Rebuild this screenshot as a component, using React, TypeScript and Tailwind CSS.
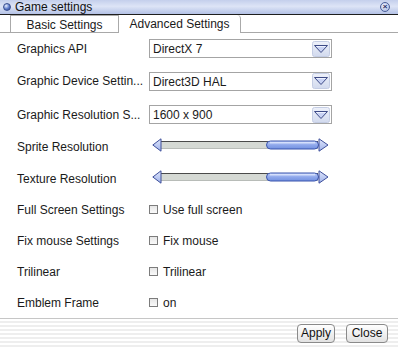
import React from "react";

const rows: { label: string; kind: "select" | "slider" | "check"; value?: string; h: string }[] = [
    {label: "Graphics API", kind: "select", value: "DirectX 7", h: "h-[31px]"},
    {label: "Graphic Device Settin...", kind: "select", value: "Direct3D HAL", h: "h-[34px]"},
    {label: "Graphic Resolution S...", kind: "select", value: "1600 x 900", h: "h-[33px]"},
    {label: "Sprite Resolution", kind: "slider", h: "h-[32px]"},
    {label: "Texture Resolution", kind: "slider", h: "h-[31px]"},
    {label: "Full Screen Settings", kind: "check", value: "Use full screen", h: "h-[31px]"},
    {label: "Fix mouse Settings", kind: "check", value: "Fix mouse", h: "h-[31px]"},
    {label: "Trilinear", kind: "check", value: "Trilinear", h: "h-[31px]"},
    {label: "Emblem Frame", kind: "check", value: "on", h: "h-[31px]"},
];

const DropArrow = () => (
    <svg width="18" height="16" viewBox="0 0 18 16">
        <defs>
            <linearGradient id="dab" x1="0" y1="0" x2="0" y2="1">
                <stop offset="0" stopColor="#eef1fa"/>
                <stop offset="1" stopColor="#d2daee"/>
            </linearGradient>
        </defs>
        <rect x="0.5" y="0.5" width="17" height="15" rx="2" fill="url(#dab)" stroke="#c4cde4"/>
        <path d="M2.5 4.5 L15.5 4.5 L9 11.5 Z" fill="#c9d3f4" stroke="#3d4a86" strokeWidth="1" strokeLinejoin="round"/>
        <path d="M4.5 5.5 L13.5 5.5" stroke="#eef2ff" strokeWidth="1"/>
    </svg>
);

const Slider = () => (
    <svg width="177" height="14" viewBox="0 0 177 14">
        <defs>
            <linearGradient id="thumb" x1="0" y1="0" x2="0" y2="1">
                <stop offset="0" stopColor="#c8d6fa"/>
                <stop offset="0.5" stopColor="#8fa8ec"/>
                <stop offset="1" stopColor="#7391e0"/>
            </linearGradient>
            <linearGradient id="arr" x1="0" y1="0" x2="0" y2="1">
                <stop offset="0" stopColor="#dfe6fc"/>
                <stop offset="1" stopColor="#9fb2ea"/>
            </linearGradient>
        </defs>
        <rect x="8" y="3" width="158" height="8" fill="#d5d9d4"/>
        <path d="M8 3.5 L166 3.5" stroke="#4a4a4a"/>
        <path d="M8 10.5 L166 10.5" stroke="#b8bcb8"/>
        <rect x="114.5" y="3" width="52" height="8" rx="4" fill="url(#thumb)" stroke="#3b55ad"/>
        <path d="M118 4.8 L163 4.8" stroke="#e4ebff" strokeWidth="1"/>
        <path d="M0.8 7 L9 0.8 L9 13.2 Z" fill="url(#arr)" stroke="#3e4f9a" strokeLinejoin="round"/>
        <path d="M176 7 L167 0.8 L167 13.2 Z" fill="url(#arr)" stroke="#3e4f9a" strokeLinejoin="round"/>
    </svg>
);

const Control = ({kind, value}: { kind: string; value?: string }) => {
    if (kind === "select") {
        return (
            <div className="w-[183px] h-[19px] border border-[#a4a4a4] bg-white flex items-center justify-between pl-[3px] pr-[1px]">
                <span className="text-[12px] text-[#1a1a1a] leading-none pt-[1px]">{value}</span>
                <DropArrow/>
            </div>
        );
    }
    if (kind === "slider") {
        return (
            <div className="pl-[3px] -mt-[4px]">
                <Slider/>
            </div>
        );
    }
    return (
        <div className="flex items-center gap-[5px]">
            <span className="w-[9px] h-[9px] border border-[#7c7c7c] bg-[linear-gradient(#e6e6e6,#fafafa)]"/>
            <span className="text-[12px] text-[#1a1a1a] leading-none">{value}</span>
        </div>
    );
};

export default function App() {
    return (
        <div
            className="w-[398px] h-[347px] bg-white overflow-hidden flex flex-col text-[#1a1a1a]"
            style={{fontFamily: '"Liberation Sans", Arial, sans-serif'}}
        >
            <div
                className="h-[15px] shrink-0 flex items-center justify-between pl-[3px] pr-[8px] border-b border-[#1e1e1e] bg-[linear-gradient(#c4cfec,#dde4f6_45%,#b4c2e6)]">
                <div className="flex items-center gap-[4px]">
                    <span
                        className="w-[8px] h-[8px] rounded-full bg-[radial-gradient(circle_at_35%_30%,#e8efff,#5b79c9_55%,#2e4690)] border border-[#3a4f8f]"/>
                    <span className="text-[12px] leading-none text-[#111]">Game settings</span>
                </div>
                <span
                    className="w-[10px] h-[10px] rounded-full border border-[#4a5f9a] bg-[radial-gradient(circle_at_40%_35%,#eef2ff,#9fb0dc)] flex items-center justify-center text-[8px] leading-none text-[#1c2a5c] font-bold">×</span>
            </div>

            <div className="h-[18px] shrink-0 flex items-end pl-[10px] border-b border-[#a8a8a8]">
                <div
                    className="w-[109px] h-[17px] border border-b-0 border-[#aaaaaa] bg-white flex items-center justify-center text-[12px] leading-none pt-[1px]">
                    Basic Settings
                </div>
                <div
                    className="w-[122px] h-[18px] -mb-px self-end bg-white border-r border-[#aaaaaa] rounded-tr-[4px] flex items-center justify-center text-[12px] leading-none">
                    Advanced Settings
                </div>
            </div>

            <div className="flex flex-col">
                {rows.map((r) => (
                    <div key={r.label} className={`${r.h} flex items-center pl-[17px]`}>
                        <span className="w-[132px] text-[12px] leading-none">{r.label}</span>
                        <Control kind={r.kind} value={r.value}/>
                    </div>
                ))}
            </div>

            <div
                className="flex-1 border-t border-[#c6c6c6] flex items-center justify-end gap-[11px] pr-[10px] bg-[repeating-linear-gradient(to_bottom,#ffffff_0px,#ffffff_2px,#eeeeee_2px,#eeeeee_4px)]">
                <button
                    className="w-[38px] h-[19px] rounded-[4px] border border-[#8a8a8a] bg-[linear-gradient(#ffffff,#e2e2e2)] text-[12px] leading-none text-[#111]">
                    Apply
                </button>
                <button
                    className="w-[42px] h-[19px] rounded-[4px] border border-[#8a8a8a] bg-[linear-gradient(#ffffff,#e2e2e2)] text-[12px] leading-none text-[#111]">
                    Close
                </button>
            </div>
        </div>
    );
}
